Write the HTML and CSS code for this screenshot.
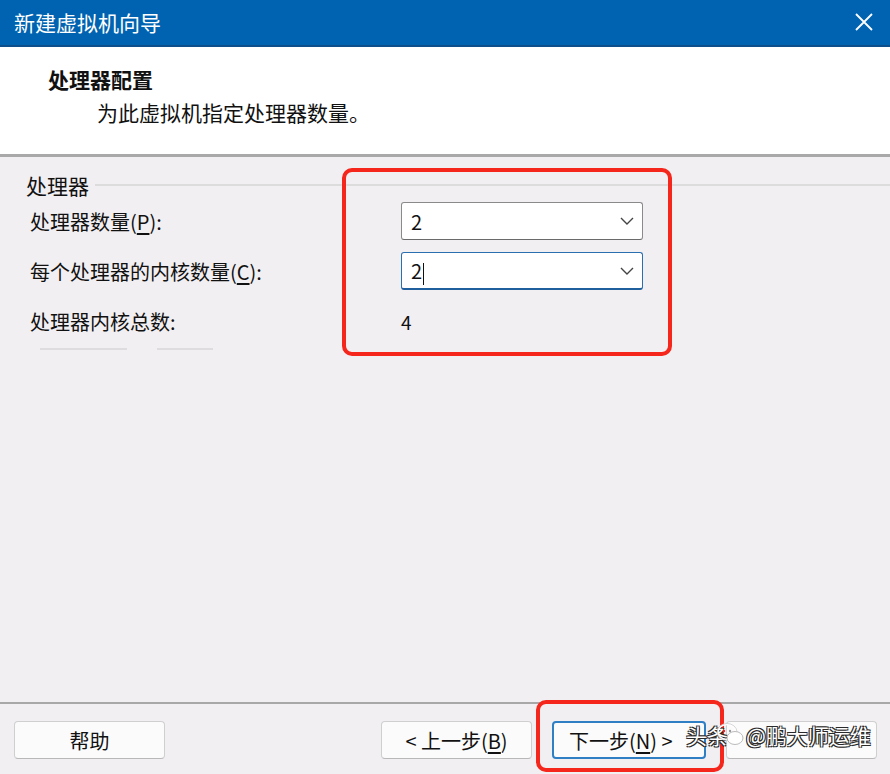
FILE: index.html
```html
<!DOCTYPE html>
<html lang="zh-CN">
<head>
    <meta charset="UTF-8">
    <title>新建虚拟机向导</title>
    <link rel="stylesheet" href="styles.css">
</head>
<body>
    <div class="wizard">
        <div class="titlebar">
            <span class="title">新建虚拟机向导</span>
            <svg class="close" width="20" height="20" viewBox="0 0 20 20">
                <path d="M2 2 L18 18 M18 2 L2 18" stroke="#ffffff" stroke-width="1.8" fill="none"/>
            </svg>
        </div>

        <div class="header">
            <div class="heading">处理器配置</div>
            <div class="subheading">为此虚拟机指定处理器数量。</div>
        </div>

        <div class="content">
            <div class="group">
                <div class="group-title"><span>处理器</span></div>
                <div class="form">
                    <label>处理器数量(<u>P</u>):</label>
                    <div class="combo">
                        <span>2</span>
                        <svg width="16" height="10" viewBox="0 0 16 10"><path d="M2 2 L8 8 L14 2" stroke="#444" stroke-width="1.4" fill="none"/></svg>
                    </div>

                    <label>每个处理器的内核数量(<u>C</u>):</label>
                    <div class="combo focused">
                        <span>2<i class="caret"></i></span>
                        <svg width="16" height="10" viewBox="0 0 16 10"><path d="M2 2 L8 8 L14 2" stroke="#444" stroke-width="1.4" fill="none"/></svg>
                    </div>

                    <label>处理器内核总数:</label>
                    <div class="total">4</div>
                </div>
                <div class="ghost-lines">
                    <i class="ghost one"></i>
                    <i class="ghost two"></i>
                </div>
            </div>
            <div class="mark mark-fields"></div>
        </div>

        <div class="footer">
            <button class="btn help">帮助</button>
            <div class="spacer"></div>
            <button class="btn back">&lt; 上一步(<u>B</u>)</button>
            <button class="btn next">下一步(<u>N</u>) &gt;</button>
            <!-- 取消 button, its label is covered by the watermark -->
            <button class="btn cancel" title="取消"></button>
            <div class="mark mark-next"></div>
            <div class="watermark">
                <span class="wm-head">头条</span>
                <svg class="wm-icon" width="30" height="26" viewBox="0 0 30 26">
                    <ellipse cx="11" cy="10" rx="9" ry="7.5" fill="none" stroke="#ffffff" stroke-width="1.6"/>
                    <ellipse cx="11" cy="10" rx="10" ry="8.5" fill="none" stroke="#cccccc" stroke-width="0.8"/>
                    <ellipse cx="19" cy="16" rx="8" ry="6.5" fill="#ffffff" stroke="#bbbbbb" stroke-width="1"/>
                    <circle cx="8" cy="9" r="1.2" fill="#e23"/>
                    <circle cx="14" cy="9" r="1.2" fill="#999"/>
                </svg>
                <span class="wm-name">@鹏大师运维</span>
            </div>
        </div>
    </div>
</body>
</html>
```

FILE: styles.css
```css
* {
    margin: 0;
    padding: 0;
    box-sizing: border-box;
}

body {
    width: 890px;
    height: 774px;
    overflow: hidden;
    font-family: "Noto Sans CJK SC", "Noto Sans", sans-serif;
    color: #111111;
    background-color: #f1eff2;
}

.wizard {
    height: 774px;
    display: flex;
    flex-direction: column;
}

.titlebar {
    height: 47px;
    background-color: #0063b1;
    border-bottom: 2px solid #0d4f8a;
    display: flex;
    align-items: center;
    justify-content: space-between;
    padding: 0 16px 2px 14px;
}

.title {
    color: #ffffff;
    font-size: 21px;
}

.header {
    height: 110px;
    background-color: #ffffff;
    border-bottom: 3px solid #a9a9a9;
    padding: 16px 0 0 48px;
}

.heading {
    font-size: 21px;
    font-weight: bold;
    line-height: 32px;
}

.subheading {
    font-size: 21px;
    line-height: 34px;
    padding-left: 49px;
}

.content {
    flex: 1;
    position: relative;
    border-bottom: 2px solid #a8a8a8;
}

.group {
    padding: 14px 0 0 14px;
}

.group-title {
    display: flex;
    align-items: center;
    font-size: 21px;
    line-height: 28px;
}

.group-title span {
    padding: 0 6px 0 12px;
}

.group-title::after {
    content: "";
    flex: 1;
    border-top: 2px solid #dcdcdc;
}

.form {
    display: grid;
    grid-template-columns: 371px 242px;
    grid-template-rows: 38px 38px 38px;
    row-gap: 12px;
    align-items: center;
    padding: 3px 0 0 16px;
}

.form label {
    font-size: 20px;
}

.form u {
    text-underline-offset: 3px;
}

.combo {
    height: 38px;
    background-color: #ffffff;
    border: 1px solid #8a8a8a;
    border-bottom-color: #6a6a6a;
    border-radius: 3px;
    display: flex;
    align-items: center;
    justify-content: space-between;
    padding: 0 7px 0 9px;
    font-size: 20px;
}

.combo.focused {
    border-color: #2a6fb0;
    border-bottom: 2px solid #1f5f9e;
}

.caret {
    display: inline-block;
    width: 1px;
    height: 22px;
    background-color: #111111;
    vertical-align: middle;
    margin-left: 1px;
}

.total {
    font-size: 19px;
}

.ghost-lines {
    display: flex;
    gap: 30px;
    padding: 8px 0 0 26px;
}

.ghost {
    height: 2px;
    background-color: #dedcde;
}

.ghost.one { width: 87px; }
.ghost.two { width: 56px; }

.mark {
    position: absolute;
    border: 4px solid #f5261b;
    border-radius: 10px;
    pointer-events: none;
}

.mark-fields {
    left: 342px;
    top: 11px;
    width: 330px;
    height: 188px;
}

.footer {
    height: 70px;
    position: relative;
    display: flex;
    align-items: center;
    gap: 20px;
    padding: 2px 13px 0 14px;
}

.spacer {
    flex: 1;
}

.btn {
    height: 38px;
    width: 151px;
    background-color: #fbfbfb;
    border: 1px solid #cfcfcf;
    border-bottom-color: #b8b8b8;
    border-radius: 4px;
    font-family: inherit;
    font-size: 20px;
    color: #111111;
}

.btn u {
    text-underline-offset: 3px;
}

.next {
    width: 154px;
    border: 2px solid #2f7fc4;
    text-align: left;
    padding-left: 15px;
    white-space: nowrap;
}

.mark-next {
    left: 536px;
    top: -4px;
    width: 188px;
    height: 72px;
}

.watermark {
    position: absolute;
    left: 686px;
    top: 16px;
    display: flex;
    align-items: center;
    color: #ffffff;
    font-size: 21px;
    text-shadow: -1px -1px 0 #2a2a2a, 1px -1px 0 #2a2a2a, -1px 1px 0 #2a2a2a, 1px 1px 0 #2a2a2a;
}

.wm-icon {
    margin-left: -12px;
}
```
